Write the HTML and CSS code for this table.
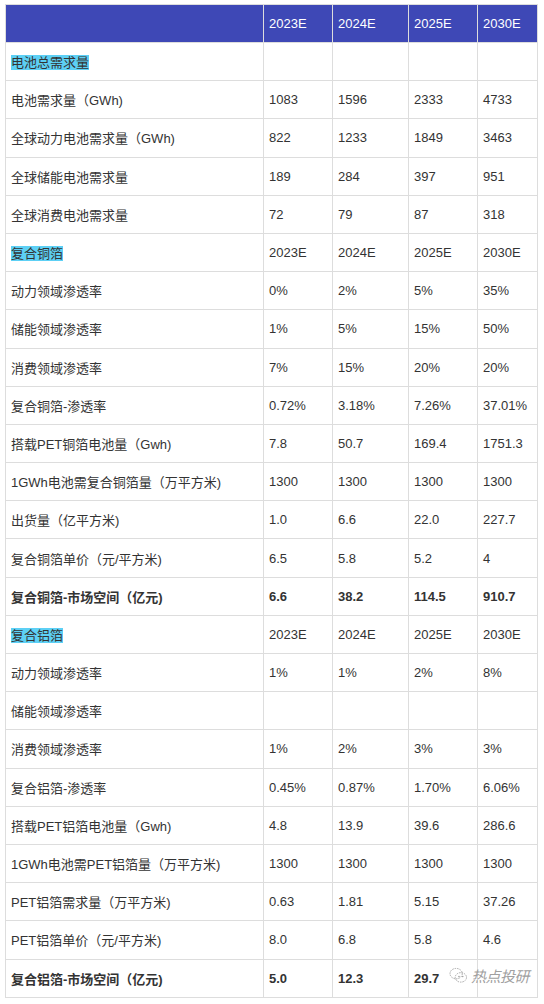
FILE: index.html
```html
<!DOCTYPE html>
<html lang="zh">
<head>
<meta charset="utf-8">
<link rel="stylesheet" href="styles.css">
</head>
<body>
<div class="wrap">
<table class="data">
<colgroup><col class="c0"><col class="c1"><col class="c2"><col class="c3"><col class="c4"></colgroup>
<thead>
<tr><th></th><th>2023E</th><th>2024E</th><th>2025E</th><th>2030E</th></tr>
</thead>
<tbody>
<tr><td><span class="hl">电池总需求量</span></td><td></td><td></td><td></td><td></td></tr>
<tr><td>电池需求量（GWh)</td><td>1083</td><td>1596</td><td>2333</td><td>4733</td></tr>
<tr><td>全球动力电池需求量（GWh)</td><td>822</td><td>1233</td><td>1849</td><td>3463</td></tr>
<tr><td>全球储能电池需求量</td><td>189</td><td>284</td><td>397</td><td>951</td></tr>
<tr><td>全球消费电池需求量</td><td>72</td><td>79</td><td>87</td><td>318</td></tr>
<tr><td><span class="hl">复合铜箔</span></td><td>2023E</td><td>2024E</td><td>2025E</td><td>2030E</td></tr>
<tr><td>动力领域渗透率</td><td>0%</td><td>2%</td><td>5%</td><td>35%</td></tr>
<tr><td>储能领域渗透率</td><td>1%</td><td>5%</td><td>15%</td><td>50%</td></tr>
<tr><td>消费领域渗透率</td><td>7%</td><td>15%</td><td>20%</td><td>20%</td></tr>
<tr><td>复合铜箔-渗透率</td><td>0.72%</td><td>3.18%</td><td>7.26%</td><td>37.01%</td></tr>
<tr><td>搭载PET铜箔电池量（Gwh)</td><td>7.8</td><td>50.7</td><td>169.4</td><td>1751.3</td></tr>
<tr><td>1GWh电池需复合铜箔量（万平方米)</td><td>1300</td><td>1300</td><td>1300</td><td>1300</td></tr>
<tr><td>出货量（亿平方米)</td><td>1.0</td><td>6.6</td><td>22.0</td><td>227.7</td></tr>
<tr><td>复合铜箔单价（元/平方米)</td><td>6.5</td><td>5.8</td><td>5.2</td><td>4</td></tr>
<tr class="bold"><td>复合铜箔-市场空间（亿元)</td><td>6.6</td><td>38.2</td><td>114.5</td><td>910.7</td></tr>
<tr><td><span class="hl">复合铝箔</span></td><td>2023E</td><td>2024E</td><td>2025E</td><td>2030E</td></tr>
<tr><td>动力领域渗透率</td><td>1%</td><td>1%</td><td>2%</td><td>8%</td></tr>
<tr><td>储能领域渗透率</td><td></td><td></td><td></td><td></td></tr>
<tr><td>消费领域渗透率</td><td>1%</td><td>2%</td><td>3%</td><td>3%</td></tr>
<tr><td>复合铝箔-渗透率</td><td>0.45%</td><td>0.87%</td><td>1.70%</td><td>6.06%</td></tr>
<tr><td>搭载PET铝箔电池量（Gwh)</td><td>4.8</td><td>13.9</td><td>39.6</td><td>286.6</td></tr>
<tr><td>1GWh电池需PET铝箔量（万平方米)</td><td>1300</td><td>1300</td><td>1300</td><td>1300</td></tr>
<tr><td>PET铝箔需求量（万平方米)</td><td>0.63</td><td>1.81</td><td>5.15</td><td>37.26</td></tr>
<tr><td>PET铝箔单价（元/平方米)</td><td>8.0</td><td>6.8</td><td>5.8</td><td>4.6</td></tr>
<tr class="bold"><td>复合铝箔-市场空间（亿元)</td><td>5.0</td><td>12.3</td><td>29.7</td><td>&nbsp;</td></tr>
</tbody>
</table>
<div class="watermark">
<svg class="wm-icon" viewBox="0 0 20 18" width="19" height="17">
<g fill="none" stroke="#9a9a9a" stroke-width="0.9" stroke-dasharray="1.6 1">
<ellipse cx="7.5" cy="7" rx="6.5" ry="5.5"/>
<ellipse cx="12.5" cy="11" rx="6" ry="5"/>
</g>
<circle cx="10.5" cy="10" r="0.8" fill="#9a9a9a"/>
<circle cx="14.5" cy="10" r="0.8" fill="#9a9a9a"/>
</svg>
<span class="wm-text">热点投研</span>
</div>
</div>
</body>
</html>
```
FILE: styles.css
```css
html, body {
  margin: 0;
  padding: 0;
  background: #ffffff;
}
body {
  padding: 4px 0 0 5px;
  font-family: "Liberation Sans", "Noto Sans CJK SC", sans-serif;
  font-size: 13px;
  color: #333333;
}
.wrap {
  position: relative;
  width: 532px;
}
.data {
  border-collapse: collapse;
  table-layout: fixed;
  width: 532px;
}
.c0 { width: 258px; }
.c1 { width: 69px; }
.c2 { width: 76px; }
.c3 { width: 69px; }
.c4 { width: 60px; }
.data th, .data td {
  border: 1px solid #dddddd;
  height: 37.2px;
  padding: 0 5px;
  text-align: left;
  vertical-align: middle;
  white-space: nowrap;
  overflow: hidden;
}
.data th {
  background: #3e48b6;
  color: #ffffff;
  font-weight: normal;
  height: 37px;
}
.hl {
  background: #5dd0f5;
}
.bold td {
  font-weight: bold;
}
.watermark {
  position: absolute;
  right: 8px;
  bottom: 12px;
  display: flex;
  align-items: center;
  gap: 3px;
}
.wm-text {
  color: #a0a0a0;
  font-size: 15px;
  font-style: italic;
  letter-spacing: -0.5px;
}
```
